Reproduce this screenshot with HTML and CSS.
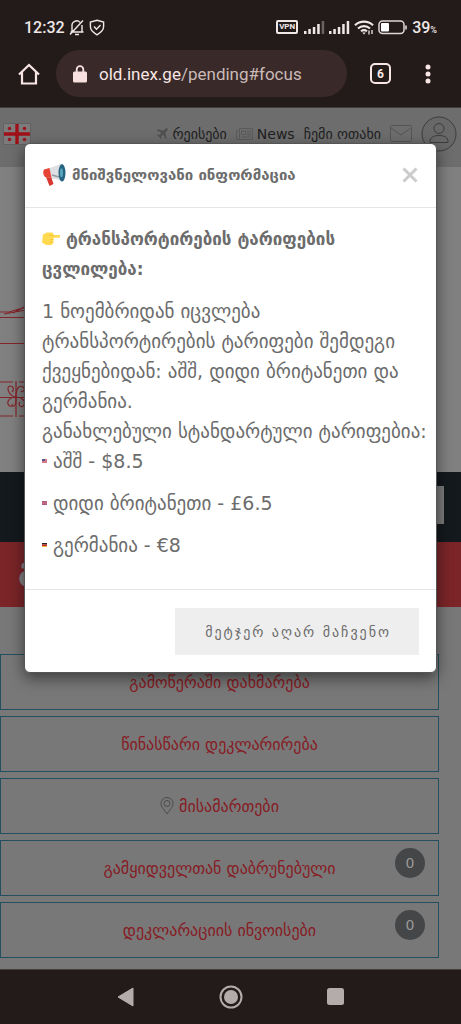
FILE: index.html
```
<!DOCTYPE html>
<html lang="ka">
<head>
<meta charset="utf-8">
<meta name="viewport" content="width=device-width, initial-scale=1">
<title>old.inex.ge</title>
<link rel="stylesheet" href="styles.css">
</head>
<body>
<header class="chrome">
  <div class="status">
    <span class="clock">12:32</span>
    <svg width="16" height="17" viewBox="0 0 16 17" fill="none" stroke="#f0e8e8" stroke-width="1.4"><path d="M3 12.5V7a4.6 4.6 0 0 1 8-3.6M13 6v6.500M1.500 13h13M6 15.500h4M1 15.500L14 1.500"/></svg>
    <svg class="shield" width="16" height="17" viewBox="0 0 16 17" fill="none" stroke="#f0e8e8" stroke-width="1.4"><path d="M8 1.200l6.600 1.800v4.500c0 3.500-2.600 6-6.600 8.300C4 13.500 1.400 11 1.400 7.500V3zM5 7.500l2.500 2.700L11.500 6"/></svg>
    <span class="vpn">VPN</span>
    <svg width="21" height="14" viewBox="0 0 21 14" fill="#f0e8e8"><path d="M0 11h2.500v3H0zM4.300 9h2.500v5H4.300zM8.800 7h2.500v7H8.800zM13.200 4h2.500v10h-2.500z"/><path fill="#6b6262" d="M17.700 1h2.500v13h-2.500z"/></svg>
    <svg width="21" height="14" viewBox="0 0 21 14" fill="#f0e8e8"><path d="M0 11h2.500v3H0zM4.300 9h2.500v5H4.300zM8.800 7h2.500v7H8.800zM13.200 4h2.500v10h-2.500zM17.700 1h2.500v13h-2.500z"/></svg>
    <svg width="20" height="15" viewBox="0 0 20 15" fill="none" stroke="#f0e8e8" stroke-width="2.100"><path d="M1 5.200a13 13 0 0 1 18 0M4 8.500a8.800 8.800 0 0 1 12 0M7 11.300a4.800 4.800 0 0 1 6 0"/><path d="M8.300 12.500h3.400L10 14.500z" fill="#f0e8e8" stroke="none"/><path d="M15 10.500v4M18 10v4" stroke-width="1.300"/></svg>
    <svg width="30" height="15" viewBox="0 0 30 15"><rect x="1" y="1" width="25" height="12.500" rx="3.500" fill="none" stroke="#e0d8d8" stroke-width="1.500"/><rect x="3" y="3" width="8" height="8.500" rx="1" fill="#fff"/><path d="M28 5.500v4" stroke="#e0d8d8" stroke-width="1.600"/></svg>
    <span class="clock charge">39<small>%</small></span>
  </div>
  <div class="toolbar">
    <button class="plain" aria-label="Home"><svg width="22" height="22" viewBox="0 0 22 22" fill="none" stroke="#f8e6e4" stroke-width="2.200"><path d="M1 11.500L11 2l10 9.500M4 9v11.500h14V9"/></svg></button>
    <div class="address">
      <svg width="14" height="18" viewBox="0 0 14 18"><rect y="6.500" width="14" height="11" rx="1.500" fill="#f8e0de"/><path d="M3.700 7V4.500a3.300 3.300 0 0 1 6.600 0V7" fill="none" stroke="#f8e0de" stroke-width="1.800"/></svg>
      <span><b>old.inex.ge</b>/pending#focus</span>
    </div>
    <button class="tabs" aria-label="Tabs">6</button>
    <button class="plain" aria-label="Menu"><svg width="6" height="20" viewBox="0 0 6 20" fill="#f8e6e4"><circle cx="3" cy="3" r="2.500"/><circle cx="3" cy="10" r="2.500"/><circle cx="3" cy="17" r="2.500"/></svg></button>
  </div>
</header>
<main class="view">
  <div class="page">
    <nav class="topbar">
      <svg class="flag" width="28" height="22" viewBox="0 0 28 22"><path fill="#7d7b7b" stroke="#626262" d="M.500.500h27v21H.500z"/><path d="M14 1v20M1 11h26" stroke="#a01018" stroke-width="3.400"/><g fill="#981820"><circle cx="6.500" cy="5.500" r="1.800"/><circle cx="21.500" cy="5.500" r="1.800"/><circle cx="6.500" cy="16.500" r="1.800"/><circle cx="21.500" cy="16.500" r="1.800"/></g></svg>
      <a href="#flights"><svg width="12" height="12" viewBox="0 0 12 12"><path fill="#505050" d="M11.500.500c-.7-.6-1.700-.2-2.600.7L7.300 2.800 1.600 1.300.7 2.200l4.700 2.500-2 2.200-1.700-.3-.7.700 2.200 1.500 1.500 2.200.7-.7-.3-1.700 2.200-2 2.500 4.700.9-.9-1.500-5.700 1.600-1.600c.9-.9 1.300-1.900.7-2.600z"/></svg>რეისები</a>
      <a href="#news"><svg width="17" height="12" viewBox="0 0 17 12" fill="none" stroke="#5a5a5a"><path d="M3.500.500h13v11H2a1.500 1.500 0 0 1-1.500-1.500V3h3zM3.500 3v7M5.500 3h4v3.500h-4zM11 3h4M11 5h4M11 7h4M5.500 9H15"/></svg>News</a>
      <a href="#room">ჩემი ოთახი</a>
      <svg width="22" height="17" viewBox="0 0 22 17" fill="none" stroke="#555"><rect x=".500" y=".500" width="21" height="16" rx="1"/><path d="M1 3l10 7 10-7"/></svg>
      <svg class="user" width="36" height="36" viewBox="0 0 36 36" fill="none" stroke="#3c3c3c"><circle cx="18" cy="18" r="17" fill="#686868"/><circle cx="18" cy="12.500" r="5"/><path d="M9 26.500v-1c0-4 3.500-6 9-6s9 2 9 6v1z"/></svg>
    </nav>
    <section class="banner">
      <svg width="26" height="120" viewBox="0 0 26 120" fill="none" stroke="#85252b" stroke-width="1.200"><path d="M0 14h9L26 9M4 16L26 12M13 15L26 8M0 19.500h26M0 45.500h26M0 84h13M19 84h7M0 99.500h26M0 118h13M19 118h7M16 83v36"/><path d="M16 99C8 98 6 88 10 88s4 4 2 6M16 99c0-10 4-12 7-10s0 6-2 4M16 99c-6 0-9 4-8 7s5 3 4 0M16 99c0 8-1 10-4 9M16 99c6 0 10 4 8 8s-7 0-4-3"/></svg>
    </section>
    <section class="search"><input aria-label="ძიება" type="text"></section>
    <section class="title">გ</section>
    <ul class="links">
      <li><a href="#help">გამოწერაში დახმარება</a></li>
      <li><a href="#declare">წინასწარი დეკლარირება</a></li>
      <li><a href="#addresses"><svg width="14" height="18" viewBox="0 0 14 18" fill="none" stroke="#4c4c4c"><path d="M7 17C4.500 13 1 10 1 6.500a6 6 0 0 1 12 0C13 10 9.500 13 7 17z"/><circle cx="7" cy="6.500" r="3"/></svg>მისამართები</a></li>
      <li><a href="#returned">გამყიდველთან დაბრუნებული</a><span class="count">0</span></li>
      <li><a href="#invoices">დეკლარაციის ინვოისები</a><span class="count">0</span></li>
    </ul>
  </div>
  <div class="overlay">
    <section class="modal" role="dialog" aria-labelledby="modal-title">
      <header class="modal-head">
        <svg width="23" height="22" viewBox="0 0 23 22"><path d="M1 6L18 0l3 17L2 13z" fill="#dedfe2"/><path d="M1 5.500L6.500 4l2 10L2 13Q-1 9 1 5.500z" fill="#e84436"/><path d="M3 13l5.500 1 2 6-4 2z" fill="#d93730"/><path d="M9 11l7 2" stroke="#939aa2" stroke-width="1.500"/><ellipse cx="19" cy="8.800" rx="3.500" ry="8.700" fill="#266581"/><ellipse cx="18.500" cy="8.800" rx="1.500" ry="4.500" fill="#5ca5bd"/></svg>
        <h2 id="modal-title">მნიშვნელოვანი ინფორმაცია</h2>
        <button class="close" aria-label="დახურვა"><svg width="16" height="16" viewBox="0 0 16 16" stroke="#ccc" stroke-width="3"><path d="M1.500 1.500l13 13M14.500 1.500l-13 13"/></svg></button>
      </header>
      <div class="modal-body">
        <h3><svg width="18" height="13" viewBox="0 0 18 13"><path d="M1 2.500L5 .500h5.500L12 3h5a1.300 1.300 0 0 1 0 2.700h-5.500v5L9.500 13H4L0 10.500z" fill="#ffd94f"/><path d="M7 3.500h5M8 7.500h3.500M8 10h3" stroke="#f5c63c" fill="none"/></svg> ტრანსპორტირების ტარიფების ცვლილება:</h3>
        <p>1 ნოემბრიდან იცვლება ტრანსპორტირების ტარიფები შემდეგი ქვეყნებიდან: აშშ, დიდი ბრიტანეთი და გერმანია.<br>განახლებული სტანდარტული ტარიფებია:</p>
        <ul class="rates">
          <li><svg width="5" height="4" viewBox="0 0 5 4"><path fill="#d57b89" d="M0 0h5v4H0z"/><path fill="#575786" d="M0 0h3v2H0z"/></svg>აშშ - $8.5</li>
          <li><svg width="5" height="4" viewBox="0 0 5 4"><path fill="#a75c82" d="M0 0h5v4H0z"/><path stroke="#dc7384" d="M0 2h5"/></svg>დიდი ბრიტანეთი - £6.5</li>
          <li><svg width="5" height="4" viewBox="0 0 5 4"><path fill="#222" d="M0 0h5v1.500H0z"/><path fill="#c92822" d="M0 1.500h5V3H0z"/><path fill="#f2bd38" d="M0 3h5v1H0z"/></svg>გერმანია - €8</li>
        </ul>
      </div>
      <footer class="modal-foot"><button class="dismiss">მეტჯერ აღარ მაჩვენო</button></footer>
    </section>
  </div>
</main>
<footer class="android">
  <button class="plain" aria-label="Back"><svg width="18" height="22" viewBox="0 0 18 22"><path d="M16 2v18L1 11z" fill="#b4acab" stroke="#b4acab" stroke-linejoin="round"/></svg></button>
  <button class="plain" aria-label="Home screen"><svg width="24" height="24" viewBox="0 0 24 24"><circle cx="12" cy="12" r="10.500" fill="none" stroke="#b4acab" stroke-width="2"/><circle cx="12" cy="12" r="7" fill="#b4acab"/></svg></button>
  <button class="plain" aria-label="Recent apps"><svg width="18" height="18" viewBox="0 0 18 18"><rect width="17" height="17" rx="2.500" fill="#b4acab"/></svg></button>
</footer>
</body>
</html>
```
FILE: styles.css
```
* { box-sizing: border-box; }
body {
  margin: 0;
  min-height: 100vh;
  display: flex;
  flex-direction: column;
  background: #231b1a;
  font-family: "DejaVu Sans", sans-serif;
}
button { font: inherit; cursor: pointer; }
svg { flex: none; }
ul { list-style: none; margin: 0; padding: 0; }
h2, h3, p { margin: 0; }

.chrome { font-family: Roboto, sans-serif; color: #f0e8e8; padding-bottom: 10px; border-bottom: 1px solid #443d3c; }
.status { display: flex; align-items: center; gap: 4px; padding: 18px 24px 0; height: 36px; }
.clock { font-size: 16px; font-weight: 500; }
.shield { margin-right: auto; }
.vpn { margin-right: 2px; border: 2px solid #f0e8e8; border-radius: 2px; font-size: 8px; line-height: 10px; font-weight: 700; padding: 0 1px; }
.charge small { font-size: 9px; }
.toolbar { display: flex; align-items: center; padding: 14px 30px 0 18px; }
.plain { border: 0; padding: 0; background: none; display: flex; }
.address {
  flex: 1;
  margin: 0 23px 0 16px;
  height: 47px;
  border-radius: 24px;
  background: #392a29;
  display: flex;
  align-items: center;
  gap: 12px;
  padding: 0 17px;
  font-size: 17px;
  color: #cbbab8;
  min-width: 0;
}
.address b { font-weight: 400; color: #f8e6e4; }
.tabs {
  width: 21px;
  height: 21px;
  margin-right: 34px;
  padding: 0;
  border: 2px solid #f8e6e4;
  border-radius: 5px;
  background: none;
  color: #f8e6e4;
  font-size: 12px;
  line-height: 16px;
  font-weight: 700;
}

.view { flex: 1; position: relative; display: flex; flex-direction: column; }
.page { flex: 1; background: #787878; }
.topbar {
  height: 59px;
  padding: 0 4px 8px 3px;
  display: flex;
  align-items: center;
  gap: 9px;
  background: #6d6d6d;
}
.topbar a { display: flex; align-items: center; gap: 4px; color: #202020; text-decoration: none; font-size: 14px; white-space: nowrap; }
.flag { margin-right: auto; }
.banner { height: 305px; background: #808080; padding-top: 131px; }
.banner svg { display: block; }
.search { height: 70px; background: #14191d; display: flex; padding: 14px 17px 14px 48px; }
.search input { flex: 1; border: 0; background: #7a7a7a; height: 38px; }
.title { height: 65px; padding: 7px 18px; background: #7b2528; color: #858080; font-size: 32px; line-height: 40px; font-weight: 700; }
.links { display: grid; gap: 6px; padding: 47px 22px 9px 0; }
.links li { position: relative; }
.links a {
  display: flex;
  align-items: center;
  justify-content: center;
  gap: 5px;
  height: 56px;
  border: 1px solid #234f60;
  color: #871b24;
  font-size: 16px;
  text-decoration: none;
}
.count {
  position: absolute;
  top: 8px;
  right: 14px;
  width: 30px;
  height: 30px;
  border-radius: 50%;
  background: #444648;
  color: #9a9a9a;
  font-size: 14px;
  line-height: 30px;
  text-align: center;
}

.overlay { position: absolute; inset: 0; padding: 35px 24px; }
.modal { background: #fff; border-radius: 6px; border: 1px solid #555; box-shadow: 0 5px 15px rgba(0, 0, 0, .5); color: #6c6c6c; }
.modal-head { display: flex; align-items: center; gap: 6px; height: 64px; padding: 0 18px 2px; border-bottom: 1px solid #e5e5e5; }
.modal-head h2 { flex: 1; font-size: 15px; white-space: nowrap; }
.close { border: 0; background: none; padding: 0; display: flex; }
.modal-body { padding: 16px 8px 29px 17px; font-size: 19px; line-height: 30px; }
.modal-body h3 { font-size: 17px; margin-bottom: 12px; }
.rates { display: grid; gap: 12px; }
.rates li { display: flex; align-items: center; gap: 6px; }
.modal-foot { border-top: 1px solid #e5e5e5; padding: 18px 17px 17px; display: flex; justify-content: flex-end; }
.dismiss { border: 0; background: #eee; color: #6c6c6c; height: 47px; padding: 0 28px 0 30px; font-size: 14px; letter-spacing: 2px; }

.android { height: 55px; border-top: 1px solid #443d3c; display: flex; align-items: center; justify-content: center; gap: 84px; }
```
